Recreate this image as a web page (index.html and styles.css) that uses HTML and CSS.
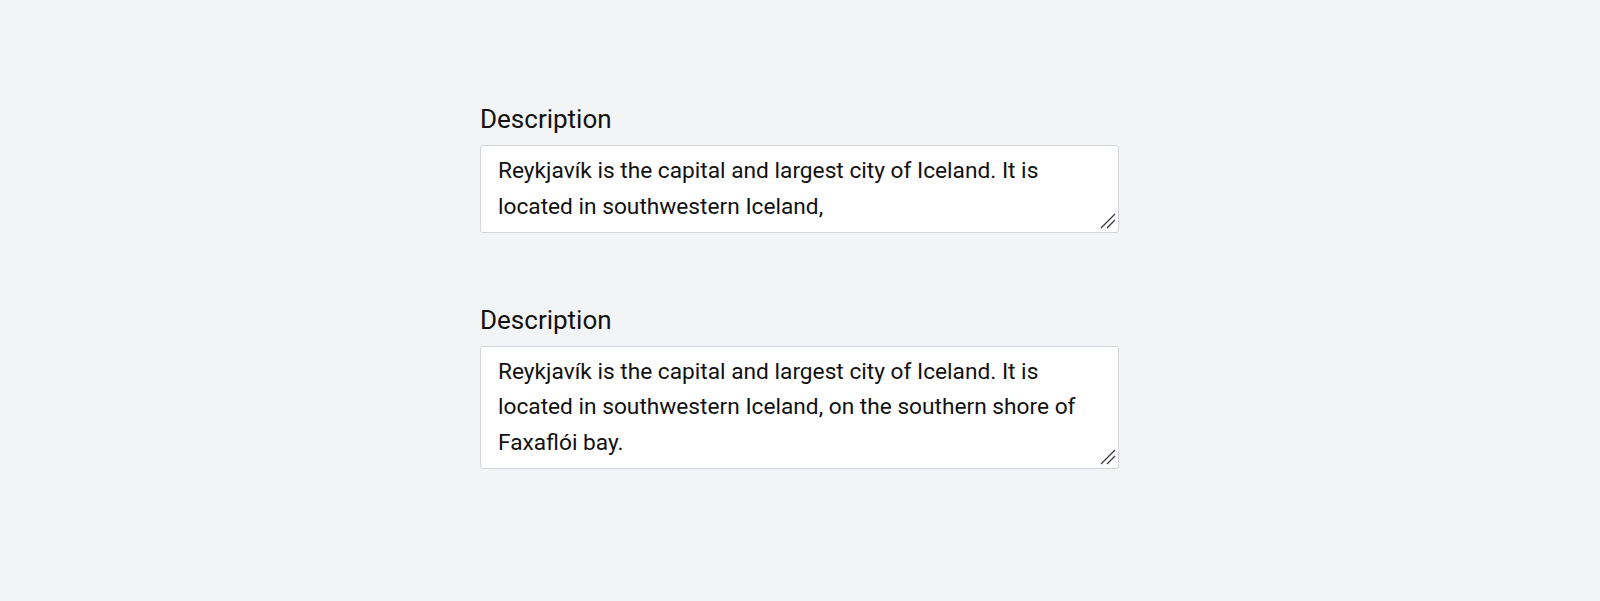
FILE: index.html
```html
<!DOCTYPE html>
<html lang="en">
<head>
<meta charset="utf-8">
<title>Description</title>
<link rel="stylesheet" href="styles.css">
</head>
<body>
<main class="page">
  <div class="field">
    <label class="label" for="d1">Description</label>
    <div class="control">
      <textarea class="textarea textarea-2" id="d1">Reykjavík is the capital and largest city of Iceland. It is located in southwestern Iceland,</textarea>
      <svg class="grip" width="18" height="18" viewBox="0 0 18 18" aria-hidden="true">
        <line x1="2" y1="15" x2="16" y2="1" />
        <line x1="8" y1="15" x2="16" y2="7" />
      </svg>
    </div>
  </div>
  <div class="field">
    <label class="label" for="d2">Description</label>
    <div class="control">
      <textarea class="textarea textarea-3" id="d2">Reykjavík is the capital and largest city of Iceland. It is located in southwestern Iceland, on the southern shore of Faxaflói bay.</textarea>
      <svg class="grip" width="18" height="18" viewBox="0 0 18 18" aria-hidden="true">
        <line x1="2" y1="15" x2="16" y2="1" />
        <line x1="8" y1="15" x2="16" y2="7" />
      </svg>
    </div>
  </div>
</main>
</body>
</html>
```

FILE: styles.css
```css
html, body {
  margin: 0;
  padding: 0;
}
body {
  background: #f3f4f6;
  font-family: Roboto, "Liberation Sans", sans-serif;
  color: #111;
}
.page {
  width: 640px;
  margin: 0 auto;
  padding-top: 101px;
  display: flex;
  flex-direction: column;
  gap: 69px;
}
.field {
  display: flex;
  flex-direction: column;
}
.label {
  display: block;
  font-size: 26px;
  line-height: 36px;
  margin-bottom: 8px;
  color: #111;
}
.control {
  position: relative;
  width: 639px;
}
.textarea {
  display: block;
  box-sizing: border-box;
  width: 639px;
  margin: 0;
  padding: 7px 17px;
  border: 1px solid #d1d5db;
  border-radius: 3px;
  background: #fff;
  font-family: Roboto, "Liberation Sans", sans-serif;
  font-size: 22.7px;
  line-height: 35.75px;
  color: #111;
  outline: none;
  overflow: hidden;
  resize: none;
}
.textarea-2 {
  height: 87.5px;
}
.textarea-3 {
  height: 123.25px;
}
.grip {
  position: absolute;
  right: 2px;
  bottom: 2px;
  pointer-events: none;
}
.grip line {
  stroke: #3a3a3a;
  stroke-width: 1.2;
}
```
